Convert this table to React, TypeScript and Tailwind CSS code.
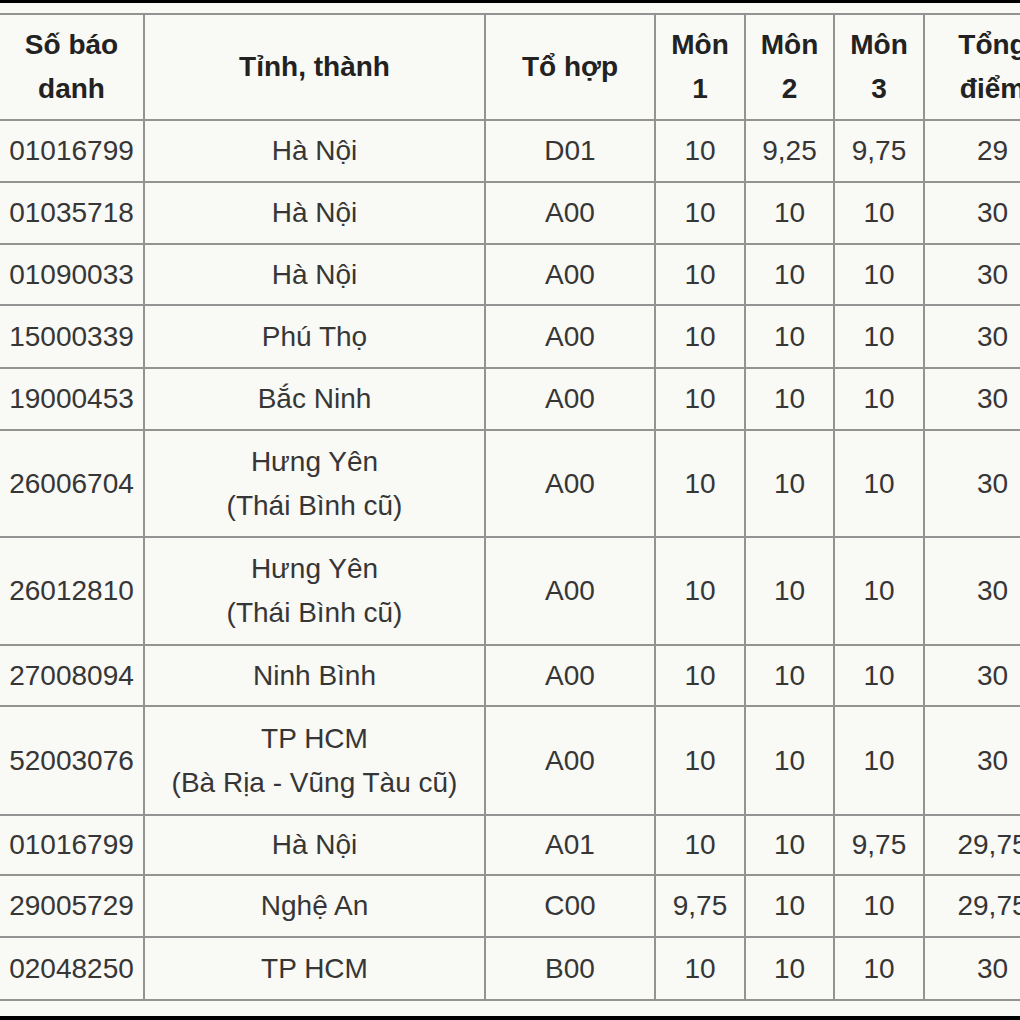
import React from "react";

type Row = { sbd: string; tinh: string[]; to: string; m1: string; m2: string; m3: string; tong: string; h: string };

const rows: Row[] = [
  { sbd: "01016799", tinh: ["Hà Nội"], to: "D01", m1: "10", m2: "9,25", m3: "9,75", tong: "29", h: "h-[62px]" },
  { sbd: "01035718", tinh: ["Hà Nội"], to: "A00", m1: "10", m2: "10", m3: "10", tong: "30", h: "h-[62px]" },
  { sbd: "01090033", tinh: ["Hà Nội"], to: "A00", m1: "10", m2: "10", m3: "10", tong: "30", h: "h-[61px]" },
  { sbd: "15000339", tinh: ["Phú Thọ"], to: "A00", m1: "10", m2: "10", m3: "10", tong: "30", h: "h-[63px]" },
  { sbd: "19000453", tinh: ["Bắc Ninh"], to: "A00", m1: "10", m2: "10", m3: "10", tong: "30", h: "h-[62px]" },
  { sbd: "26006704", tinh: ["Hưng Yên", "(Thái Bình cũ)"], to: "A00", m1: "10", m2: "10", m3: "10", tong: "30", h: "h-[107px]" },
  { sbd: "26012810", tinh: ["Hưng Yên", "(Thái Bình cũ)"], to: "A00", m1: "10", m2: "10", m3: "10", tong: "30", h: "h-[108px]" },
  { sbd: "27008094", tinh: ["Ninh Bình"], to: "A00", m1: "10", m2: "10", m3: "10", tong: "30", h: "h-[61px]" },
  { sbd: "52003076", tinh: ["TP HCM", "(Bà Rịa - Vũng Tàu cũ)"], to: "A00", m1: "10", m2: "10", m3: "10", tong: "30", h: "h-[109px]" },
  { sbd: "01016799", tinh: ["Hà Nội"], to: "A01", m1: "10", m2: "10", m3: "9,75", tong: "29,75", h: "h-[60px]" },
  { sbd: "29005729", tinh: ["Nghệ An"], to: "C00", m1: "9,75", m2: "10", m3: "10", tong: "29,75", h: "h-[62px]" },
  { sbd: "02048250", tinh: ["TP HCM"], to: "B00", m1: "10", m2: "10", m3: "10", tong: "30", h: "h-[63px]" },
];

const td = "border-2 border-[#939393] text-center align-middle p-0 leading-[44px]";

export default function App() {
  return (
    <div
      className="w-[1020px] h-[1020px] overflow-hidden bg-[#f9f9f5] border-t-[3px] border-b-[4px] border-black pt-[10px]"
      style={{ fontFamily: '"Liberation Sans", Arial, sans-serif' }}
    >
      <table className="table-fixed border-collapse w-[1062px] ml-[-2px] text-[28px] text-[#363636]">
        <colgroup>
          <col className="w-[145px]" />
          <col className="w-[341px]" />
          <col className="w-[170px]" />
          <col className="w-[90px]" />
          <col className="w-[89px]" />
          <col className="w-[90px]" />
          <col className="w-[137px]" />
        </colgroup>
        <thead>
          <tr className="h-[106px] font-bold text-[#222222]">
            <td className={td}>Số báo<br />danh</td>
            <td className={td}>Tỉnh, thành</td>
            <td className={td}>Tổ hợp</td>
            <td className={td}>Môn<br />1</td>
            <td className={td}>Môn<br />2</td>
            <td className={td}>Môn<br />3</td>
            <td className={td}>Tổng<br />điểm</td>
          </tr>
        </thead>
        <tbody>
          {rows.map((r, i) => (
            <tr key={i} className={r.h}>
              <td className={td}>{r.sbd}</td>
              <td className={td}>
                {r.tinh.map((t, j) => (
                  <div key={j}>{t}</div>
                ))}
              </td>
              <td className={td}>{r.to}</td>
              <td className={td}>{r.m1}</td>
              <td className={td}>{r.m2}</td>
              <td className={td}>{r.m3}</td>
              <td className={td}>{r.tong}</td>
            </tr>
          ))}
        </tbody>
      </table>
    </div>
  );
}
